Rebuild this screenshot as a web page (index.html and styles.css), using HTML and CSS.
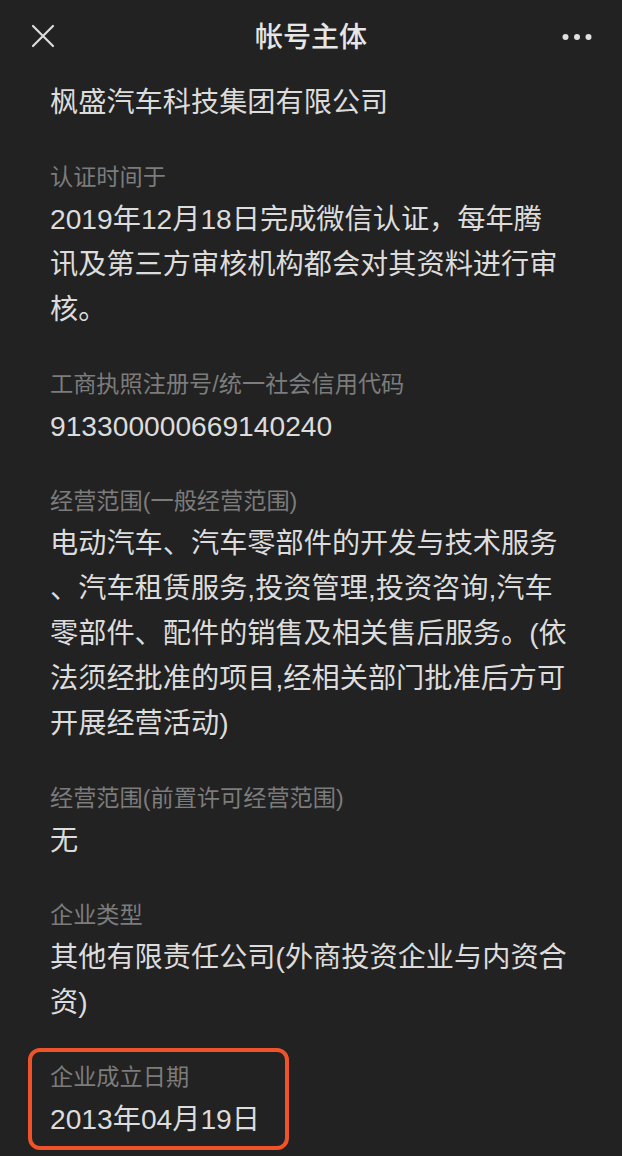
FILE: index.html
```html
<!DOCTYPE html>
<html lang="zh-CN">
<head>
<meta charset="utf-8">
<title>帐号主体</title>
<link rel="stylesheet" href="styles.css">
</head>
<body>
<header class="nav">
  <svg class="nav-close" width="24" height="24" viewBox="0 0 24 24" aria-hidden="true">
    <path d="M2 2 L22 22 M22 2 L2 22" stroke="#dcdcdc" stroke-width="2.2" stroke-linecap="round" fill="none"/>
  </svg>
  <h1 class="nav-title">帐号主体</h1>
  <svg class="nav-more" width="30" height="8" viewBox="0 0 30 8" aria-hidden="true">
    <circle cx="3.5" cy="4" r="3" fill="#e0e0e0"/>
    <circle cx="15" cy="4" r="3" fill="#e0e0e0"/>
    <circle cx="26.5" cy="4" r="3" fill="#e0e0e0"/>
  </svg>
</header>
<main class="content">
  <section class="item">
    <p class="value">枫盛汽车科技集团有限公司</p>
  </section>
  <section class="item">
    <p class="label">认证时间于</p>
    <p class="value">2019年12月18日完成微信认证，每年腾讯及第三方审核机构都会对其资料进行审核。</p>
  </section>
  <section class="item">
    <p class="label">工商执照注册号/统一社会信用代码</p>
    <p class="value">913300000669140240</p>
  </section>
  <section class="item">
    <p class="label">经营范围(一般经营范围)</p>
    <p class="value">电动汽车、汽车零部件的开发与技术服务、汽车租赁服务,投资管理,投资咨询,汽车零部件、配件的销售及相关售后服务。(依法须经批准的项目,经相关部门批准后方可开展经营活动)</p>
  </section>
  <section class="item">
    <p class="label">经营范围(前置许可经营范围)</p>
    <p class="value">无</p>
  </section>
  <section class="item">
    <p class="label">企业类型</p>
    <p class="value">其他有限责任公司(外商投资企业与内资合资)</p>
  </section>
  <section class="item item-highlight">
    <p class="label">企业成立日期</p>
    <p class="value">2013年04月19日</p>
  </section>
</main>
</body>
</html>
```
FILE: styles.css
```css
html, body {
  margin: 0;
  padding: 0;
  background: #222222;
}
body {
  width: 622px;
  min-height: 1156px;
  font-family: "Liberation Sans", "Noto Sans CJK SC", sans-serif;
  color: #dcdcdc;
  overflow: hidden;
}
.nav {
  height: 76px;
  display: flex;
  align-items: center;
  justify-content: space-between;
  padding: 0 30px 0 31px;
  position: relative;
}
.nav-close {
  display: block;
  margin-top: -4px;
}
.nav-title {
  margin: 0;
  font-size: 28px;
  font-weight: 500;
  color: #e6e6e6;
  position: absolute;
  left: 0;
  right: 0;
  text-align: center;
  line-height: 76px;
  pointer-events: none;
}
.nav-more {
  display: block;
  margin-top: -2px;
}
.content {
  padding: 4px 53.5px 0 50px;
  display: flex;
  flex-direction: column;
  gap: 32px;
}
.item {
  display: flex;
  flex-direction: column;
}
.label {
  margin: 0;
  font-size: 23.2px;
  line-height: 40px;
  color: #7c7c7c;
}
.value {
  margin: 0;
  font-size: 28.2px;
  line-height: 45px;
  color: #dcdcdc;
  line-break: anywhere;
}
.item-highlight {
  align-self: flex-start;
  margin: -9px 0 0 -22px;
  padding: 5px 25px 4px 18px;
  border: 4px solid #f0532a;
  border-radius: 12px;
}
```
